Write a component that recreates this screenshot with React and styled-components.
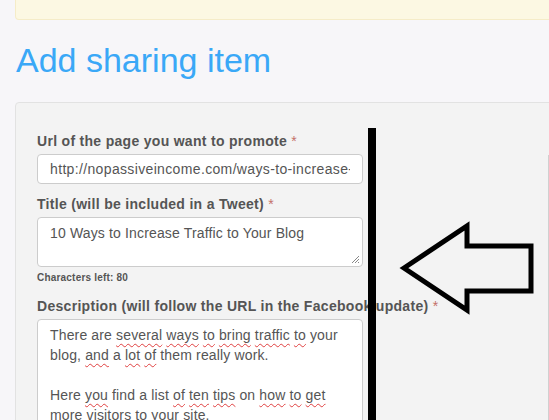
import styled, { createGlobalStyle } from 'styled-components'

const Global = createGlobalStyle`
    html, body {
        margin: 0;
        padding: 0;
        background: #f7f6f9;
        font-family: "Liberation Sans", Arial, sans-serif;
        overflow: hidden;
    }
`

const Page = styled.div`
    position: relative;
    width: 549px;
    height: 420px;
    overflow: hidden;
    padding-left: 15px;
    box-sizing: border-box;
`

const Alert = styled.div`
    height: 19px;
    margin-right: -20px;
    background: #fcf8e3;
    border: 1px solid #f5ecc8;
    border-top: none;
    border-radius: 0 0 4px 4px;
`

const Heading = styled.h1`
    margin: 22px 0 23px 1px;
    font-size: 34px;
    line-height: 37px;
    font-weight: normal;
    color: #3aa8f7;
`

const Panel = styled.div`
    display: flex;
    margin-right: -20px;
    height: 400px;
    padding: 28px 0 0 21px;
    background: #f3f3f3;
    border: 1px solid #e2e2e2;
    border-radius: 4px;
`

const FormColumn = styled.div`
    width: 326px;
    flex-shrink: 0;
`

const SideColumn = styled.div`
    margin: 24px 0 0 185px;
    flex: 1;
    border-left: 2px solid #d0d0d0;
    background: #f5f5f5;
`

const Group = styled.div`
    margin-bottom: ${p => p.gap ?? 10}px;
`

const Label = styled.label`
    display: block;
    margin-bottom: 3px;
    font-size: 14px;
    line-height: 20px;
    font-weight: bold;
    letter-spacing: 0.3px;
    color: #555;
    white-space: nowrap;
`

const Required = styled.span`
    font-weight: normal;
    color: #c47068;
`

const Input = styled.input`
    display: block;
    width: 100%;
    height: 30px;
    box-sizing: border-box;
    margin: 0;
    padding: 5px 12px;
    background: #fff;
    border: 1px solid #ccc;
    border-radius: 4px;
    outline: none;
    font-family: "Liberation Sans", Arial, sans-serif;
    font-size: 14px;
    line-height: 18px;
    letter-spacing: 0.35px;
    color: #555;
`

const Area = styled.div`
    position: relative;
    height: ${p => p.height}px;
    box-sizing: border-box;
    padding: 5px 12px;
    background: #fff;
    border: 1px solid #ccc;
    border-radius: 4px;
    font-size: 14px;
    line-height: 20px;
    letter-spacing: 0.15px;
    color: #555;
    overflow: hidden;
`

const Grip = styled.svg`
    position: absolute;
    right: 2px;
    bottom: 2px;
`

const Hint = styled.div`
    margin-top: 4px;
    font-size: 10px;
    line-height: 14px;
    font-weight: bold;
    letter-spacing: 0.2px;
    color: #555;
`

const Typo = styled.span`
    text-decoration: underline wavy #e04040;
    text-decoration-thickness: 1px;
    text-underline-offset: 3px;
`

const Overlay = styled.svg`
    position: absolute;
    left: 0;
    top: 0;
    pointer-events: none;
`

export default function App() {
    return (
        <>
            <Global />
            <Page>
                <Alert />
                <Heading>Add sharing item</Heading>
                <Panel>
                    <FormColumn>
                        <Group>
                            <Label>Url of the page you want to promote <Required>*</Required></Label>
                            <Input readOnly value="http://nopassiveincome.com/ways-to-increase-traffic-to-your-blog" />
                        </Group>
                        <Group gap={0}>
                            <Label>Title (will be included in a Tweet) <Required>*</Required></Label>
                            <Area height={50}>
                                10 Ways to Increase Traffic to Your Blog
                                <Grip width="9" height="9" viewBox="0 0 9 9">
                                    <path d="M8 1 L1 8 M8 4 L4 8 M8 7 L7 8" stroke="#888" strokeWidth="1" />
                                </Grip>
                            </Area>
                            <Hint>Characters left: 80</Hint>
                        </Group>
                        <Group style={{ marginTop: 11 }}>
                            <Label>Description (will follow the URL in the Facebook update) <Required>*</Required></Label>
                            <Area height={140}>
                                There are <Typo>several</Typo> <Typo>ways</Typo> <Typo>to</Typo> <Typo>bring</Typo> <Typo>traffic</Typo> <Typo>to</Typo> your
                                blog, <Typo>and</Typo> a <Typo>lot</Typo> <Typo>of</Typo> them really work.
                                <br />
                                <br />
                                Here <Typo>you</Typo> find a list <Typo>of</Typo> <Typo>ten</Typo> <Typo>tips</Typo> on <Typo>how</Typo> <Typo>to</Typo> <Typo>get</Typo> more visitors to your site.
                            </Area>
                        </Group>
                    </FormColumn>
                    <SideColumn />
                </Panel>
                <Overlay width="549" height="420" viewBox="0 0 549 420">
                    <rect x="368" y="128" width="8" height="300" fill="#000" />
                    <polygon
                        points="404,268 467,226 467,246 531,246 531,291 467,291 467,310"
                        fill="none"
                        stroke="#000"
                        strokeWidth="5"
                        strokeLinejoin="miter"
                    />
                </Overlay>
            </Page>
        </>
    )
}
